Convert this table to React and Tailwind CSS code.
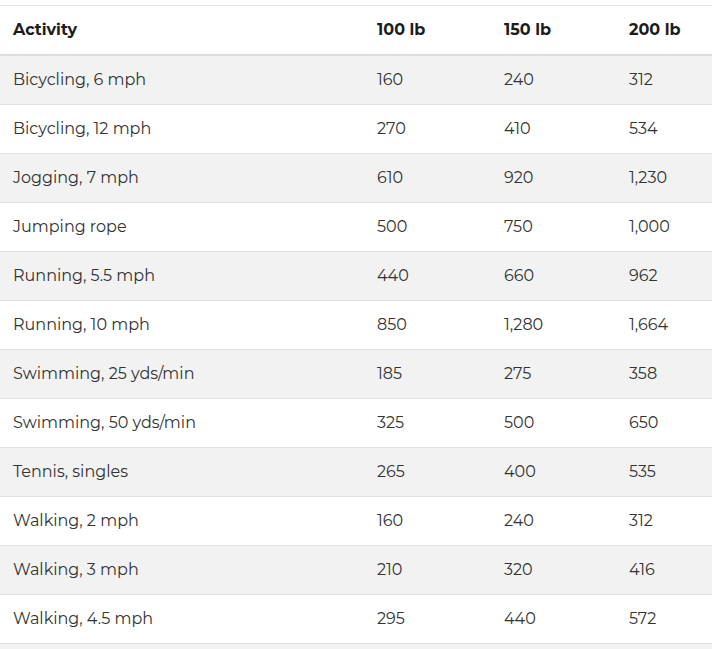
import React from "react";

const rows = [
  ["Bicycling, 6 mph", "160", "240", "312"],
  ["Bicycling, 12 mph", "270", "410", "534"],
  ["Jogging, 7 mph", "610", "920", "1,230"],
  ["Jumping rope", "500", "750", "1,000"],
  ["Running, 5.5 mph", "440", "660", "962"],
  ["Running, 10 mph", "850", "1,280", "1,664"],
  ["Swimming, 25 yds/min", "185", "275", "358"],
  ["Swimming, 50 yds/min", "325", "500", "650"],
  ["Tennis, singles", "265", "400", "535"],
  ["Walking, 2 mph", "160", "240", "312"],
  ["Walking, 3 mph", "210", "320", "416"],
  ["Walking, 4.5 mph", "295", "440", "572"],
];

const App = () => {
  return (
    <div className="min-h-screen bg-white pt-[5px] font-['Montserrat','DejaVu_Sans',sans-serif]">
      {/* Header */}
      <div className="grid grid-cols-[364px_127px_125px_1fr] h-[51px] items-center border-t border-b-2 border-t-[#e2e2e2] border-b-[#dcdce0] text-[16px] font-bold text-[#1c1c1c]">
        <div className="pl-[13px]">Activity</div>
        <div className="pl-[13px]">100 lb</div>
        <div className="pl-[13px]">150 lb</div>
        <div className="pl-[13px]">200 lb</div>
      </div>

      {/* Rows */}
      {rows.map((r, i) => (
        <div
          key={i}
          className={
            "grid grid-cols-[364px_127px_125px_1fr] h-[49px] items-center border-b border-[#e2e2e2] text-[16px] text-[#333]" +
            (i % 2 === 0 ? " bg-[#f2f2f2]" : " bg-white")
          }
        >
          {r.map((c, j) => (
            <div key={j} className="pl-[13px]">
              {c}
            </div>
          ))}
        </div>
      ))}
      <div className="h-[49px] bg-[#f2f2f2]"></div>
    </div>
  );
};

export default App;
